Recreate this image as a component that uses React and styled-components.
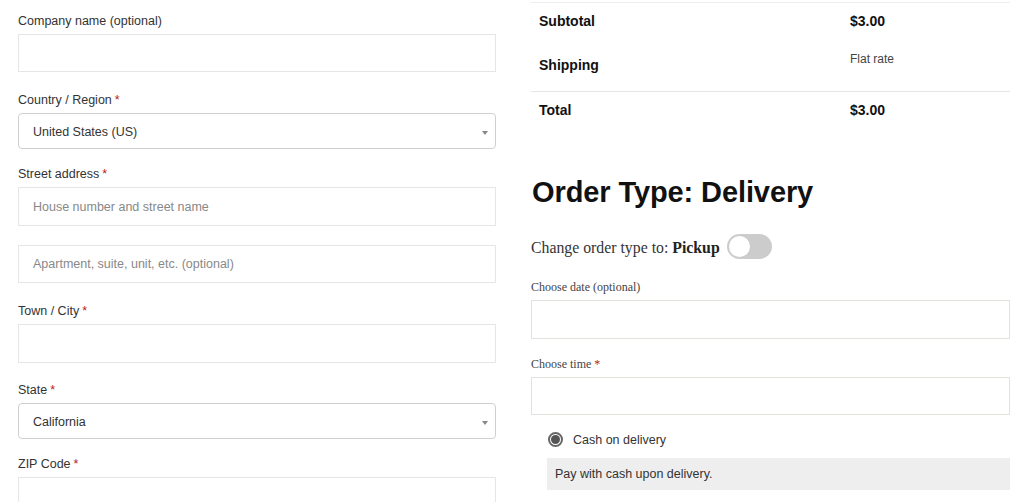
import React from "react";
import styled, { createGlobalStyle } from "styled-components";

const Global = createGlobalStyle`
  html, body { margin: 0; padding: 0; background: #fff; }
  body { font-family: "Liberation Sans", Arial, sans-serif; color: #333; }
  * { box-sizing: border-box; }
`;

const Page = styled.div`
  display: grid;
  grid-template-columns: 478px 479px;
  column-gap: 35px;
  padding-left: 18px;
  width: 1024px;
  height: 502px;
  overflow: hidden;
`;

const Column = styled.div`
  display: flex;
  flex-direction: column;
`;

const LeftCol = styled(Column)`
  padding-top: 12px;
`;

const Field = styled.div`
  display: flex;
  flex-direction: column;
  gap: 4px;
  margin-bottom: ${(p) => p.$mb ?? 19}px;
`;

const Label = styled.label`
  font-size: 12.5px;
  line-height: 18px;
  color: #333;
  height: 18px;
`;

const Req = styled.span`
  color: #b22222;
  margin-left: 3px;
`;

const Input = styled.div`
  height: ${(p) => p.$h ?? 38}px;
  border: 1px solid #e6e6e6;
  background: #fff;
  display: flex;
  align-items: center;
  padding: 0 14px;
  font-size: 12.5px;
  color: #888;
`;

const Select = styled.div`
  height: 36px;
  border: 1px solid #cfcfcf;
  border-radius: 4px;
  display: flex;
  align-items: center;
  justify-content: space-between;
  padding: 1px 7px 0 14px;
  font-size: 12.5px;
  color: #333;
`;

const Caret = styled.span`
  width: 0;
  height: 0;
  border-left: 3.5px solid transparent;
  border-right: 3.5px solid transparent;
  border-top: 4px solid #888;
  margin-top: 2px;
`;

const RightCol = styled(Column)`
  padding-top: 2px;
`;

const Table = styled.table`
  width: 100%;
  border-collapse: collapse;
  border-top: 1px solid #eee;
  font-size: 14px;
  color: #111;
`;

const Row = styled.tr`
  border-top: ${(p) => (p.$line ? "1px solid #e6e6e6" : "none")};
`;

const Th = styled.th`
  text-align: left;
  font-weight: 700;
  padding: 0 8px;
  height: ${(p) => p.$h}px;
  width: 311px;
  vertical-align: middle;
`;

const Td = styled.td`
  padding: ${(p) => (p.$top ? "13px 8px 0" : "0 8px")};
  font-weight: ${(p) => (p.$light ? 400 : 700)};
  font-size: ${(p) => (p.$light ? "12px" : "14px")};
  color: ${(p) => (p.$light ? "#444" : "#111")};
  vertical-align: ${(p) => (p.$top ? "top" : "middle")};
`;

const Heading = styled.h2`
  margin: 47px 0 0 1px;
  font-size: 29px;
  line-height: 34px;
  font-weight: 700;
  color: #111;
  letter-spacing: -0.1px;
  font-family: "Liberation Sans", Arial, sans-serif;
`;

const ToggleRow = styled.div`
  display: flex;
  align-items: center;
  gap: 7px;
  margin-top: 27px;
  font-family: "Liberation Serif", "Times New Roman", serif;
  font-size: 15.8px;
  color: #333;
`;

const Strong = styled.strong`
  font-weight: 700;
  color: #222;
`;

const Track = styled.span`
  position: relative;
  width: 45px;
  height: 25px;
  border-radius: 13px;
  background: #ccc;
  display: inline-block;
  margin: -2px 0 2px;
`;

const Knob = styled.span`
  position: absolute;
  left: 2px;
  top: 2px;
  width: 21px;
  height: 21px;
  border-radius: 50%;
  background: #fff;
`;

const SerifField = styled.div`
  display: flex;
  flex-direction: column;
  gap: 6px;
  margin-top: ${(p) => p.$mt}px;
`;

const SerifLabel = styled.label`
  font-family: "Liberation Serif", "Times New Roman", serif;
  font-size: 12px;
  line-height: 14px;
  color: #444;
`;

const SerifInput = styled.div`
  height: ${(p) => p.$h}px;
  border: 1.5px solid #e4e2dc;
  background: #fff;
`;

const Payment = styled.div`
  margin-top: 16px;
  padding-left: 16px;
  display: flex;
  flex-direction: column;
`;

const RadioRow = styled.div`
  display: flex;
  align-items: center;
  gap: 10px;
  padding-left: 1px;
  height: 18px;
  font-size: 12.5px;
  color: #333;
`;

const Radio = styled.span`
  width: 15px;
  height: 15px;
  border-radius: 50%;
  border: 2px solid #666;
  display: inline-flex;
  align-items: center;
  justify-content: center;
  &::after {
    content: "";
    width: 9px;
    height: 9px;
    border-radius: 50%;
    background: #555;
  }
`;

const Box = styled.div`
  margin-top: 9px;
  background: #eeeeee;
  height: 32px;
  display: flex;
  align-items: center;
  padding: 0 8px;
  font-size: 12.5px;
  color: #333;
`;

export default function App() {
  return (
    <>
      <Global />
      <Page>
        <LeftCol>
          <Field>
            <Label>Company name (optional)</Label>
            <Input />
          </Field>
          <Field $mb={16}>
            <Label>
              Country / Region<Req>*</Req>
            </Label>
            <Select>
              United States (US)
              <Caret />
            </Select>
          </Field>
          <Field>
            <Label>
              Street address<Req>*</Req>
            </Label>
            <Input $h={39}>House number and street name</Input>
          </Field>
          <Field>
            <Input>Apartment, suite, unit, etc. (optional)</Input>
          </Field>
          <Field $mb={18}>
            <Label>
              Town / City<Req>*</Req>
            </Label>
            <Input $h={39}>{""}</Input>
          </Field>
          <Field $mb={16}>
            <Label>
              State<Req>*</Req>
            </Label>
            <Select>
              California
              <Caret />
            </Select>
          </Field>
          <Field>
            <Label>
              ZIP Code<Req>*</Req>
            </Label>
            <Input />
          </Field>
        </LeftCol>
        <RightCol>
          <Table>
            <tbody>
              <Row>
                <Th $h={36}>Subtotal</Th>
                <Td>$3.00</Td>
              </Row>
              <Row>
                <Th $h={53}>Shipping</Th>
                <Td $top $light>
                  Flat rate
                </Td>
              </Row>
              <Row $line>
                <Th $h={36}>Total</Th>
                <Td>$3.00</Td>
              </Row>
            </tbody>
          </Table>
          <Heading>Order Type: Delivery</Heading>
          <ToggleRow>
            <span>
              Change order type to: <Strong>Pickup</Strong>
            </span>
            <Track>
              <Knob />
            </Track>
          </ToggleRow>
          <SerifField $mt={19}>
            <SerifLabel>Choose date (optional)</SerifLabel>
            <SerifInput $h={39} />
          </SerifField>
          <SerifField $mt={18}>
            <SerifLabel>
              Choose time<Req>*</Req>
            </SerifLabel>
            <SerifInput $h={38} />
          </SerifField>
          <Payment>
            <RadioRow>
              <Radio />
              Cash on delivery
            </RadioRow>
            <Box>Pay with cash upon delivery.</Box>
          </Payment>
        </RightCol>
      </Page>
    </>
  );
}
